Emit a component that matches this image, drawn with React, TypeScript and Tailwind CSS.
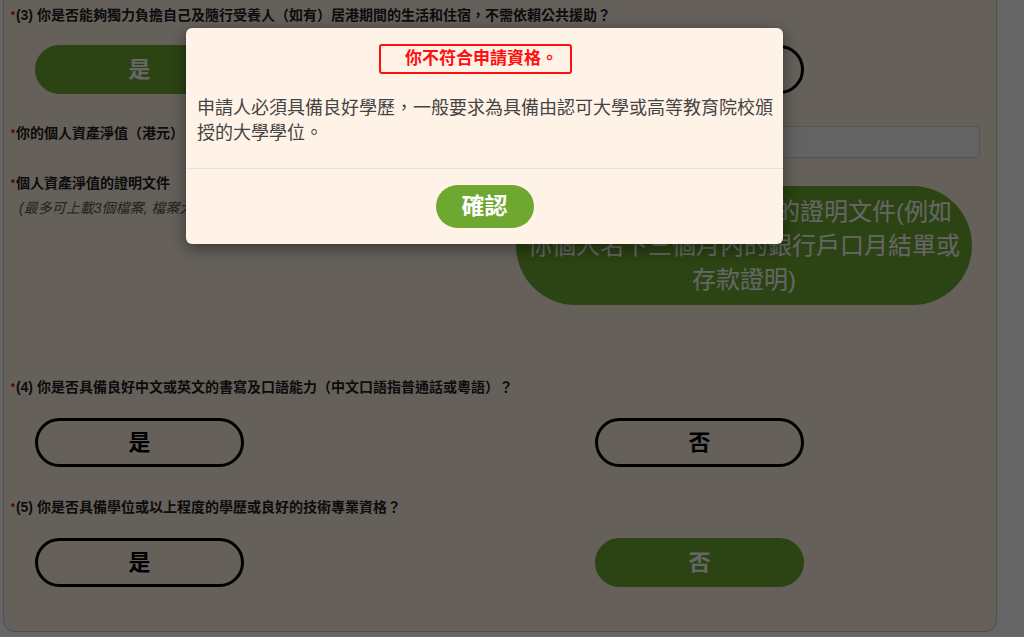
import React from "react"

const font = "font-['Liberation_Sans','Noto_Sans_CJK_TC',sans-serif]"

function Req() {
	return <span className="text-[10px] text-[#d40000] align-top mr-[1px] relative top-[1px]">*</span>
}

function Label({ children }: { children: React.ReactNode }) {
	return (
		<div className="text-[14px] leading-[20px] font-bold text-[#222]">
			<Req />
			{children}
		</div>
	)
}

function Choice({ label, active }: { label: string; active?: boolean }) {
	return (
		<button
			className={
				active
					? "w-[209px] h-[49px] rounded-full bg-[#6ea830] border-[3px] border-[#6ea830] text-white text-[22px] font-bold"
					: "w-[209px] h-[49px] rounded-full bg-transparent border-[3px] border-black text-black text-[22px] font-bold"
			}
		>
			{label}
		</button>
	)
}

function Choices({ value, className }: { value?: "yes" | "no"; className: string }) {
	return (
		<div className={`flex gap-[351px] ml-[24px] ${className}`}>
			<Choice label="是" active={value === "yes"} />
			<Choice label="否" active={value === "no"} />
		</div>
	)
}

export default function App() {
	return (
		<main className={`${font} relative min-h-[637px] bg-white overflow-hidden`}>
			<section className="ml-[3px] w-[994px] h-[632px] bg-[#fdf0e0] border-x border-b border-[#c8c8c8] rounded-b-[12px] pl-[7px] pr-[16px] pt-[5px]">
				<Label>(3) 你是否能夠獨力負擔自己及隨行受養人（如有）居港期間的生活和住宿，不需依賴公共援助？</Label>
				<Choices value="yes" className="mt-[20px]" />

				<div className="grid grid-cols-[505px_1fr] mt-[29px]">
					<Label>你的個人資產淨值（港元）</Label>
					<input className="mt-[3px] h-[32px] w-full rounded-[4px] border border-[#cfcfcf] bg-[#f7f7f7]" />
				</div>

				<div className="grid grid-cols-[505px_1fr] mt-[15px]">
					<div>
						<Label>個人資產淨值的證明文件</Label>
						<div className="mt-[5px] ml-[8px] text-[14px] leading-[20px] italic text-[#555]">
							(最多可上載3個檔案, 檔案大小不可超過5MB)
						</div>
					</div>
					<button className="mt-[13px] w-[456px] h-[119px] rounded-full bg-[#6ea830] px-[10px] text-white text-[24px] leading-[34px]">
						上載你的個人資產淨值的證明文件(例如你個人名下三個月內的銀行戶口月結單或存款證明)
					</button>
				</div>

				<div className="mt-[72px]">
					<Label>(4) 你是否具備良好中文或英文的書寫及口語能力（中文口語指普通話或粵語）？</Label>
				</div>
				<Choices className="mt-[21px]" />

				<div className="mt-[30px]">
					<Label>(5) 你是否具備學位或以上程度的學歷或良好的技術專業資格？</Label>
				</div>
				<Choices value="no" className="mt-[21px]" />
			</section>

			<div className="absolute inset-0 bg-black/60" />

			<div className="absolute left-[186px] top-[28px] w-[597px] rounded-[6px] bg-[#fff3e8] shadow-[0_4px_16px_rgba(0,0,0,0.45)]">
				<div className="pt-[16px] pl-[11px] pr-[9px]">
					<div className="flex justify-center">
						<div className="mr-[20px] h-[30px] flex items-center pl-[24px] pr-[12px] border-2 border-[#ff1010] rounded-[3px] text-[#ff1010] text-[17px] font-bold">
							你不符合申請資格。
						</div>
					</div>
					<p className="mt-[22px] pb-[22px] text-[18px] leading-[25px] text-[#444]">
						申請人必須具備良好學歷，一般要求為具備由認可大學或高等教育院校頒授的大學學位。
					</p>
				</div>
				<div className="border-t border-[#dfe3e8] py-[16px] flex justify-center">
					<button className="w-[98px] h-[43px] rounded-full bg-[#6ea830] text-white text-[23px] font-bold">確認</button>
				</div>
			</div>
		</main>
	)
}
